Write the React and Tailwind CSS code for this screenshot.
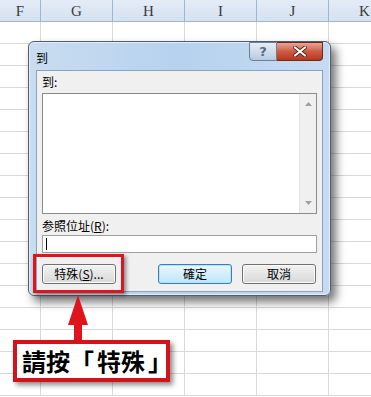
const cols = ["F", "G", "H", "I", "J", "K"];
const rows = Array.from({ length: 17 });
const cjk = { fontFamily: '"Noto Sans CJK TC", "Noto Sans", sans-serif' };

function Sheet() {
	return (
		<div className="w-[371px] h-[397px] overflow-hidden bg-white">
			<div className="grid grid-cols-[41px_72px_72px_72px_72px_72px_72px] h-[22px] bg-gradient-to-b from-[#e4ecf7] to-[#d5e1f0] border-b border-[#9eb6ce]">
				{cols.map((c) => (
					<div
						key={c}
						className="border-r border-[#9eb6ce] flex items-center justify-center text-[15px] text-[#3a3a3a]"
						style={{ fontFamily: '"Liberation Serif", serif' }}
					>
						{c}
					</div>
				))}
			</div>
			{rows.map((_, i) => (
				<div
					key={i}
					className="grid grid-cols-[41px_72px_72px_72px_72px_72px_72px] h-[22px] border-b border-[#d9d9d9]"
				>
					{cols.map((c) => (
						<div key={c} className="border-r border-[#d9d9d9]" />
					))}
				</div>
			))}
		</div>
	);
}

function Btn({ children, primary }) {
	return (
		<button
			className={`h-[20px] w-[74px] rounded-[3px] border text-[12px] text-black flex items-center justify-center leading-none
				${primary ? "border-[#3c7fb1] bg-gradient-to-b from-[#eaf6fd] to-[#bee6fd] shadow-[inset_0_0_0_1px_#aee4fb]" : "border-[#707070] bg-gradient-to-b from-[#f2f2f2] to-[#d8d8d8] shadow-[inset_0_0_0_1px_#fbfbfb]"}
			`}
			style={cjk}
		>
			{children}
		</button>
	);
}

function Dialog() {
	return (
		<div className="absolute left-[28px] top-[41px] w-[303px] h-[255px] rounded-[6px] border border-[#4d5e72] bg-gradient-to-r from-[#c9dcf0] via-[#b6d2ee] to-[#c6dbf1] shadow-[5px_6px_10px_rgba(0,0,0,0.55),inset_0_0_0_1px_#e3eefa] flex flex-col">
			<div className="h-[28px] flex items-start justify-between pl-[7px] pr-[7px]">
				<span className="text-[12px] text-black mt-[7px]" style={cjk}>
					到
				</span>
				<div className="flex mt-0">
					<div className="w-[28px] h-[19px] rounded-bl-[4px] border border-[#6d7f93] bg-gradient-to-b from-[#e6eef7] to-[#b9cbe0] flex items-center justify-center text-[13px] font-bold text-[#5a6a7c]" style={{ fontFamily: '"DejaVu Sans", sans-serif' }}>
						?
					</div>
					<div className="w-[46px] h-[19px] rounded-br-[4px] border border-l-0 border-[#6b2a1f] bg-gradient-to-b from-[#e7a596] via-[#cd5b43] to-[#b8361c] flex items-center justify-center">
						<svg width="14" height="11" viewBox="0 0 14 11">
							<path d="M2 1.5 L12 9.5 M12 1.5 L2 9.5" stroke="#4a1a12" strokeWidth="3.6" strokeLinecap="round" />
							<path d="M2 1.5 L12 9.5 M12 1.5 L2 9.5" stroke="#ffffff" strokeWidth="2.2" strokeLinecap="round" />
						</svg>
					</div>
				</div>
			</div>
			<div className="mx-[7px] mb-[3px] flex-1 border border-[#8da3bc] bg-[#f0f0f0] px-[5px] pt-[4px] flex flex-col" style={cjk}>
				<div className="text-[12px] leading-[14px] text-black">到:</div>
				<div className="mt-[4px] h-[121px] border border-[#8a8a8a] bg-white flex justify-end">
					<div className="w-[17px] bg-[#f0f0f0] border-l border-[#e4e4e4] flex flex-col items-center justify-between py-[8px]">
						<svg width="7" height="4" viewBox="0 0 7 4"><path d="M0 4 L3.5 0 L7 4 Z" fill="#a0a0a0" /></svg>
						<svg width="7" height="4" viewBox="0 0 7 4"><path d="M0 0 L3.5 4 L7 0 Z" fill="#a0a0a0" /></svg>
					</div>
				</div>
				<div className="mt-[5px] text-[12px] leading-[14px] text-black">
					参照位址(<u>R</u>):
				</div>
				<div className="mt-[2px] h-[18px] border border-[#a0a0a0] bg-white flex items-center pl-[3px]">
					<div className="w-px h-[12px] bg-black" />
				</div>
				<div className="mt-[11px] flex items-center">
					<Btn>
						特殊(<u>S</u>)...
					</Btn>
					<div className="ml-[42px]">
						<Btn primary>確定</Btn>
					</div>
					<div className="ml-[10px]">
						<Btn>取消</Btn>
					</div>
				</div>
			</div>
		</div>
	);
}

export default function App() {
	return (
		<div className="relative w-[371px] h-[397px] overflow-hidden">
			<Sheet />
			<Dialog />
			<div className="absolute left-[33px] top-[254px] w-[91px] h-[39px] border-[3px] border-[#e0141c] shadow-[2px_2px_4px_rgba(0,0,0,0.45)]" />
			<svg className="absolute left-[66px] top-[294px]" width="24" height="48" viewBox="0 0 24 48">
				<path d="M12 1 L22 31 L16 31 L16 48 L8 48 L8 31 L2 31 Z" fill="#e0141c" />
			</svg>
			<div
				className="absolute left-[13px] top-[340px] w-[157px] h-[42px] border-[4px] border-[#d3121a] bg-white shadow-[3px_3px_5px_rgba(0,0,0,0.45)] flex items-center pl-[5px] text-[24px] font-bold text-black"
				style={cjk}
			>
				<span>請按</span>
				<span className="w-[24px] text-right">「</span>
				<span className="ml-[3px]">特殊</span>
				<span className="ml-[3px] w-[12px]">」</span>
			</div>
		</div>
	);
}
